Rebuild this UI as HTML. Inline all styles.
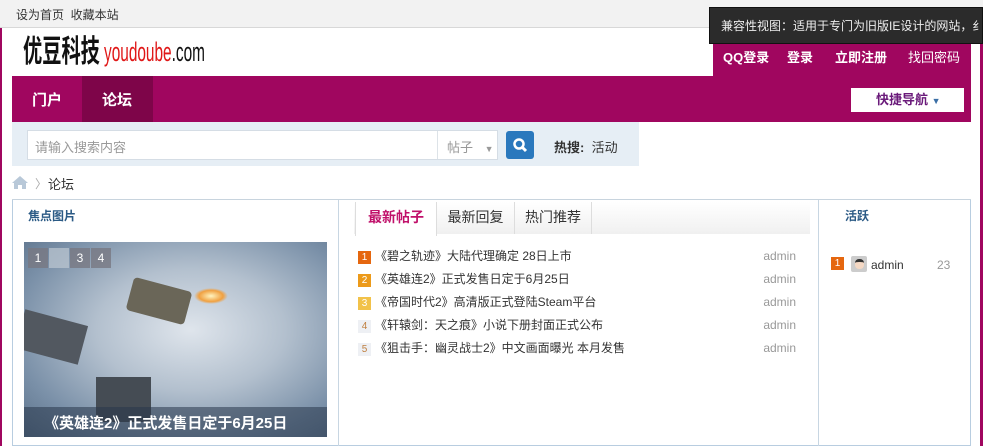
<!DOCTYPE html>
<html><head><meta charset="utf-8"><style>
*{margin:0;padding:0;box-sizing:border-box}
body{width:983px;height:446px;overflow:hidden;background:#fff;font-family:"Liberation Sans","Noto Sans CJK SC",sans-serif;font-size:12px;color:#333;position:relative}
.a{position:absolute}
</style></head><body>
<div class="a" style="left:0;top:0;width:983px;height:28px;background:#f2f2f2;border-bottom:1px solid #d8d8d8"></div>
<div class="a" style="left:16px;top:6px;font-size:12px;color:#333">设为首页&nbsp;&nbsp;收藏本站</div>
<div class="a" style="left:0;top:28px;width:2px;height:418px;background:#a0065f"></div>
<div class="a" style="left:980px;top:28px;width:3px;height:418px;background:#a0065f"></div>
<div class="a" style="left:23px;top:35px;font-size:31px;font-weight:bold;color:#111;transform:scaleX(0.62);transform-origin:left;line-height:34px;white-space:nowrap">优豆科技</div>
<div class="a" style="left:104px;top:37px;font-size:27px;color:#e01818;transform:scaleX(0.57);transform-origin:left;line-height:30px;white-space:nowrap">youdoube<span style="color:#111">.com</span></div>
<div class="a" style="left:713px;top:40px;width:258px;height:36px;background:#a0065f;color:#fff;font-size:13px;line-height:36px">
<span class="a" style="left:10px;font-weight:bold">QQ登录</span><span class="a" style="left:74px;font-weight:bold">登录</span><span class="a" style="left:122px;font-weight:bold">立即注册</span><span class="a" style="left:195px">找回密码</span></div>
<div class="a" style="left:12px;top:76px;width:959px;height:46px;background:#a0065f"></div>
<div class="a" style="left:82px;top:76px;width:71px;height:46px;background:#7e0549"></div>
<div class="a" style="left:32px;top:89px;color:#fff;font-size:15px;font-weight:bold">门户</div>
<div class="a" style="left:102px;top:89px;color:#fff;font-size:15px;font-weight:bold">论坛</div>
<div class="a" style="left:851px;top:88px;width:113px;height:24px;background:#fff;color:#6a1a7a;font-weight:bold;font-size:13px;line-height:24px;padding-left:25px">快捷导航 <span style="color:#3a6ea5;font-size:9px">▼</span></div>
<div class="a" style="left:12px;top:122px;width:627px;height:44px;background:#e6eef5"></div>
<div class="a" style="left:27px;top:130px;width:471px;height:30px;background:#fff;border:1px solid #d5dde5"></div>
<div class="a" style="left:437px;top:131px;width:1px;height:28px;background:#dde3e8"></div>
<div class="a" style="left:35px;top:137px;color:#999;font-size:13px">请输入搜索内容</div>
<div class="a" style="left:447px;top:137px;color:#999;font-size:13px">帖子 <span style="font-size:9px;margin-left:8px">▼</span></div>
<div class="a" style="left:506px;top:131px;width:28px;height:28px;background:#2a78bd;border-radius:3px"></div>
<svg class="a" style="left:512px;top:137px" width="16" height="16"><circle cx="7" cy="7" r="4.5" fill="none" stroke="#fff" stroke-width="2.5"/><path d="M10 10l4 4" stroke="#fff" stroke-width="3"/></svg>
<div class="a" style="left:554px;top:137px;font-size:13px"><b>热搜:</b>&nbsp;&nbsp;活动</div>
<svg class="a" style="left:12px;top:176px" width="16" height="13"><path d="M8 0L0 7h2v6h4V9h4v4h4V7h2z" fill="#b8c8d8"/></svg>
<div class="a" style="left:35px;top:175px;color:#aaa">〉</div>
<div class="a" style="left:48px;top:174px;font-size:13px">论坛</div>
<div class="a" style="left:12px;top:199px;width:959px;height:1px;background:#c8d4de"></div>
<div class="a" style="left:12px;top:200px;width:959px;height:246px;border:1px solid #b8cde0;border-top:none"></div>
<div class="a" style="left:338px;top:200px;width:1px;height:246px;background:#c8d6e2"></div>
<div class="a" style="left:818px;top:200px;width:1px;height:246px;background:#c8d6e2"></div>
<div class="a" style="left:28px;top:207px;color:#2b5a85;font-weight:bold;font-size:12px">焦点图片</div>
<div class="a" style="left:24px;top:242px;width:303px;height:195px;background:radial-gradient(ellipse at 55% 45%,#dfe5ec 0%,#b3c0ce 40%,#7a90a8 75%,#5a7088 100%);overflow:hidden">
<div class="a" style="left:105px;top:42px;width:60px;height:34px;background:#6a6658;transform:rotate(15deg);border-radius:4px"></div>
<div class="a" style="left:-5px;top:75px;width:65px;height:40px;background:#525860;transform:rotate(15deg)"></div>
<div class="a" style="left:72px;top:135px;width:55px;height:45px;background:#454c54"></div>
<div class="a" style="left:170px;top:46px;width:34px;height:16px;background:radial-gradient(#fff4c0,#f0a040 50%,transparent 70%)"></div>
<div class="a" style="left:0;top:165px;width:303px;height:30px;background:rgba(40,55,75,.55)"></div>
<div class="a" style="left:20px;top:170px;color:#fff;font-size:15px;font-weight:bold">《英雄连2》正式发售日定于6月25日</div>
<div class="a" style="left:4px;top:6px;width:20px;height:20px;background:rgba(120,120,130,.8);color:#fff;text-align:center;line-height:20px">1</div>
<div class="a" style="left:25px;top:6px;width:20px;height:20px;background:rgba(190,200,210,.7)"></div>
<div class="a" style="left:46px;top:6px;width:20px;height:20px;background:rgba(120,120,130,.8);color:#fff;text-align:center;line-height:20px">3</div>
<div class="a" style="left:67px;top:6px;width:20px;height:20px;background:rgba(120,120,130,.8);color:#fff;text-align:center;line-height:20px">4</div>
</div>
<div class="a" style="left:354px;top:202px;width:456px;height:32px;background:linear-gradient(#fff,#f0f0f0)"></div>
<div class="a" style="left:355px;top:202px;width:82px;height:34px;background:#fff;border-left:1px solid #ddd;border-right:1px solid #ddd;color:#c0106a;font-size:14px;font-weight:bold;line-height:30px;text-align:center">最新帖子</div>
<div class="a" style="left:437px;top:202px;width:78px;height:32px;border-right:1px solid #ddd;font-size:14px;line-height:30px;text-align:center">最新回复</div>
<div class="a" style="left:515px;top:202px;width:77px;height:32px;border-right:1px solid #ddd;font-size:14px;line-height:30px;text-align:center">热门推荐</div>
<div class="a" style="left:358px;top:245px;width:438px;line-height:23px;font-size:12px">
<div style="position:relative"><span style="display:inline-block;width:13px;height:13px;background:#e5670f;color:#fff;font-size:10px;text-align:center;line-height:13px;margin-right:4px">1</span>《碧之轨迹》大陆代理确定 28日上市<span class="a" style="right:0;color:#999">admin</span></div>
<div style="position:relative"><span style="display:inline-block;width:13px;height:13px;background:#ec9a1a;color:#fff;font-size:10px;text-align:center;line-height:13px;margin-right:4px">2</span>《英雄连2》正式发售日定于6月25日<span class="a" style="right:0;color:#999">admin</span></div>
<div style="position:relative"><span style="display:inline-block;width:13px;height:13px;background:#f2c24a;color:#fff;font-size:10px;text-align:center;line-height:13px;margin-right:4px">3</span>《帝国时代2》高清版正式登陆Steam平台<span class="a" style="right:0;color:#999">admin</span></div>
<div style="position:relative"><span style="display:inline-block;width:13px;height:13px;background:#eef0f4;color:#c08040;font-size:10px;text-align:center;line-height:13px;margin-right:4px">4</span>《轩辕剑：天之痕》小说下册封面正式公布<span class="a" style="right:0;color:#999">admin</span></div>
<div style="position:relative"><span style="display:inline-block;width:13px;height:13px;background:#eef0f4;color:#c08040;font-size:10px;text-align:center;line-height:13px;margin-right:4px">5</span>《狙击手：幽灵战士2》中文画面曝光 本月发售<span class="a" style="right:0;color:#999">admin</span></div>
</div>
<div class="a" style="left:845px;top:207px;color:#2b5a85;font-weight:bold">活跃</div>
<div class="a" style="left:831px;top:257px;width:13px;height:13px;background:#e5670f;color:#fff;font-size:10px;text-align:center;line-height:13px">1</div>
<div class="a" style="left:851px;top:256px;width:16px;height:16px;background:#ccc;border-radius:2px"><div style="margin:3px auto;width:9px;height:10px;background:#f4d8c4;border-top:3px solid #333;border-radius:4px"></div></div>
<div class="a" style="left:871px;top:258px;font-size:12px">admin</div>
<div class="a" style="left:937px;top:258px;color:#999">23</div>
<div class="a" style="left:709px;top:7px;width:274px;height:37px;background:#2b2b2b;border:1px solid #111"></div>
<div class="a" style="left:721px;top:17px;color:#eee;font-size:12px;white-space:nowrap">兼容性视图：适用于专门为旧版IE设计的网站，纟</div>
</body></html>
